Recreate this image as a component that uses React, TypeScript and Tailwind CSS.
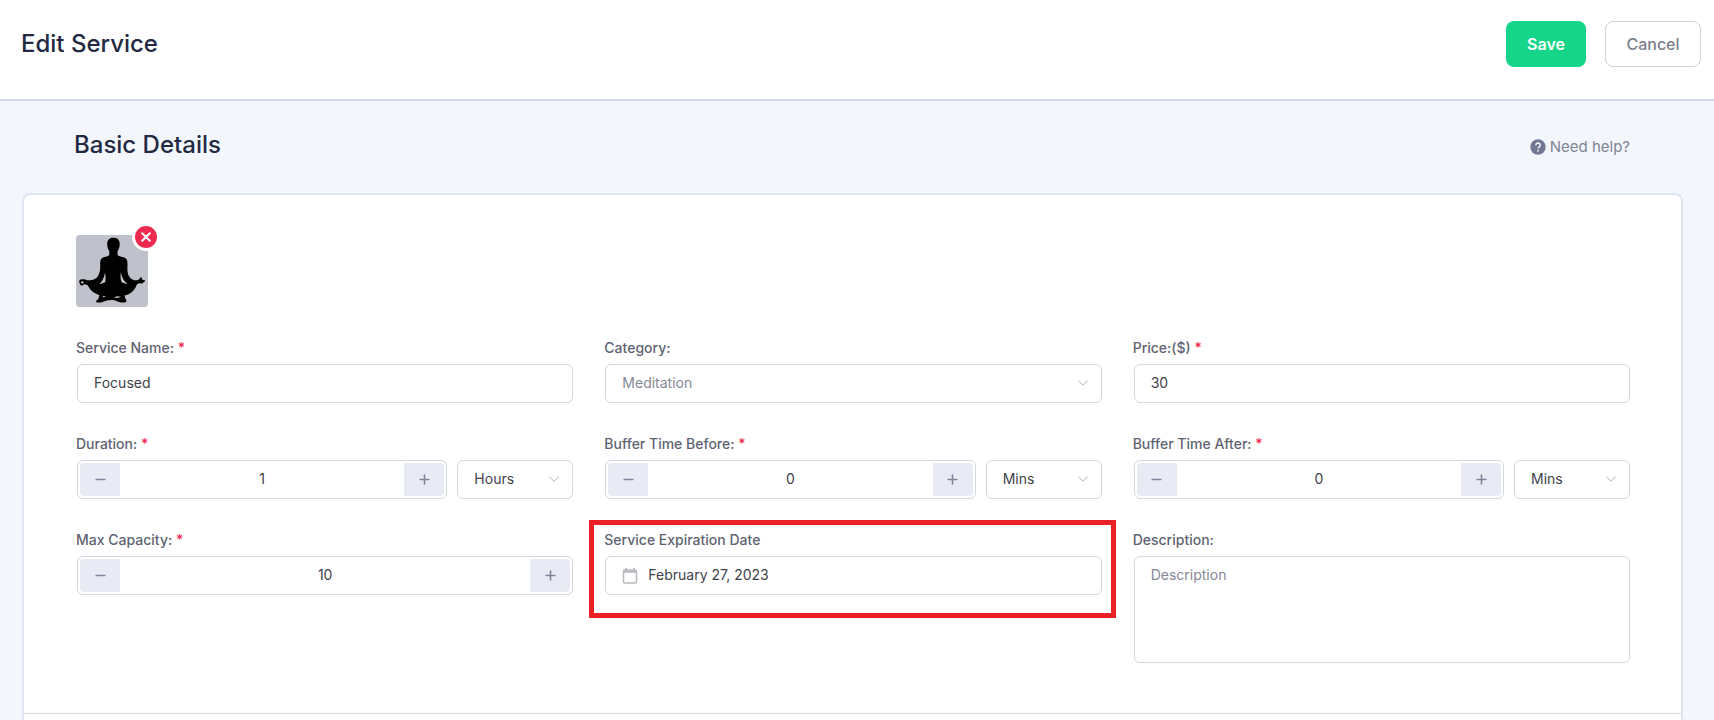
import { useState, type ReactNode } from 'react';
import { ChevronDown, Minus, Plus } from 'lucide-react';

type FieldProps = {
	id: string;
	label: string;
	required?: boolean;
	children: ReactNode;
};

const Field = ({ id, label, required, children }: FieldProps) => (
	<div className="flex flex-col gap-1.5">
		<label
			htmlFor={id}
			className="-ml-px text-sm leading-5 font-medium text-[#5f6372]"
		>
			{label}
			{required && <span className="text-[#ee2a50]"> *</span>}
		</label>
		{children}
	</div>
);

type StepperProps = { id: string; label: string; initial: number };

const Stepper = ({ id, label, initial }: StepperProps) => {
	const [value, setValue] = useState(initial);
	const buttonClass =
		'flex w-10 shrink-0 items-center justify-center bg-[#e8ebf4] text-[#80859a]';

	return (
		<div className="flex h-[39px] min-w-0 flex-1 rounded-md border border-[#d3d7e0] p-0.5">
			<button
				type="button"
				aria-label={`Decrease ${label}`}
				onClick={() => setValue(Math.max(0, value - 1))}
				className={`${buttonClass} rounded-l`}
			>
				<Minus size={15} strokeWidth={2.5} />
			</button>
			<input
				id={id}
				value={value}
				onChange={e => setValue(Number(e.target.value) || 0)}
				className="min-w-0 flex-1 bg-transparent pb-0.5 text-center text-sm text-[#3f424b] outline-none"
			/>
			<button
				type="button"
				aria-label={`Increase ${label}`}
				onClick={() => setValue(value + 1)}
				className={`${buttonClass} rounded-r`}
			>
				<Plus size={15} strokeWidth={2.5} />
			</button>
		</div>
	);
};

type SelectProps = {
	id?: string;
	label: string;
	options: string[];
	className: string;
};

const Select = ({ id, label, options, className }: SelectProps) => (
	<div className={`relative ${className}`}>
		<select
			id={id}
			aria-label={id ? undefined : label}
			className="h-[39px] w-full appearance-none rounded-md border border-[#d3d7e0] bg-white px-4 pb-0.5 text-sm outline-none"
		>
			{options.map(option => (
				<option key={option}>{option}</option>
			))}
		</select>
		<ChevronDown
			size={18}
			strokeWidth={1.25}
			className="pointer-events-none absolute top-2.5 right-2.5 text-[#a9adb8]"
		/>
	</div>
);

const inputClass =
	'h-[39px] w-full rounded-md border border-[#d3d7e0] bg-white px-4 pb-0.5 text-sm text-[#3f424b] outline-none';

const MeditationPicture = () => (
	<svg
		viewBox="0 0 72 72"
		className="size-[72px] rounded"
		role="img"
		aria-label="Meditation"
	>
		<rect width="72" height="72" fill="#c0c2cb" />
		<path d="M37 2.700c-4 0-6 2.800-5.800 6.800.1 2.800.9 5 2.100 6.500v4c-1.500 1.500-4 1.700-6.300 2.400-2.300.8-2.800 3.200-2.800 6.600 0 3.500.2 5.500-.6 8-1 3.500-2 5.500-4.500 6.700-2 1-4.500 1.800-7.300 1.600-2-.7-4.500-1.500-6.800-.9-2 .6-2.200 2.200-1.400 3.600.5 1.800 1.500 3 2.900 2.500.9-.5 1.500-1.300 3-1.100l2.300.8c1.500 3.300 3.500 5.800 6.300 7.600 2 1.300 4 2 5.500 2.400-1 1.300-.8 3-1.500 4-.8.9-2.200 1-2 2.200.2 1.400 2.200 1.100 4 1 3 .3 4.500-1.400 7-1.800 2.500-.6 3.800-.7 5.500-.6 2.500.1 4 1.300 6.500 2 2.500.7 5.500.8 7-.3 1-.9 0-2.200-.8-3.200-.5-1-.2-2-.8-3.100 2.500-.5 5.500-1.500 8-3.900 2-2 3.500-4.400 4.200-6.800 1.500-.9 2.500-1.700 4-1.200 1.200.2 2.300-.2 2.900-1.200 1-.5 1.800-1.200 1.200-2.100-1-.2-2-.3-2.600-.8-.3-1-.4-2-1-2.400-1.100.7-1.600 2-2.700 2.700-1.500.4-3.500 1-5 .4-3.500-1.300-5.200-4-5.800-7.500-.7-3.500.1-6.500-.3-10.500-.2-2.500-1-4-3.200-4.700-2.400-.8-5-.9-6.600-2.400v-4c1.200-1.500 2-3.700 2.100-6.500.2-4-1.700-6.800-5.700-6.800z" />
		<path
			d="M29 37.500c.8 3.500.8 6.500.3 9.500-1.700.8-3.600 2-6 2 2.500-2 5-6 5.700-11.500zM44.800 37.500c-.5 3.500-.3 6.500.7 9.500 1.700.8 3.600 2 6 2-3-2.500-5.700-6-6.700-11.500zM37.500 62.500l3.500-1.200 4 .5-3 1.200zM26.500 61l3.500.4-2.500 1zM5 46.800c.8-.8 2.300-.7 2.600.1.200.9-.3 1.600-1.100 1.600-1 .1-1.900-.8-1.500-1.700z"
			fill="#c0c2cb"
		/>
	</svg>
);

export default function App() {
	const [date, setDate] = useState('February 27, 2023');

	return (
		<div className="flex min-h-screen flex-col bg-[#f3f7fc] font-['Inter','Liberation_Sans',sans-serif]">
			<header className="flex h-[101px] items-start justify-between border-b-2 border-[#d5d9ea] bg-white pt-[21px] pr-[13px] pl-[21px]">
				<h1 className="pt-[7px] text-2xl leading-8 font-medium text-[#242943]">
					Edit Service
				</h1>
				<div className="flex gap-[19px]">
					<button
						type="button"
						className="h-[46px] w-20 rounded-lg bg-[#15d688] text-base font-semibold text-white"
					>
						Save
					</button>
					<button
						type="button"
						className="h-[46px] w-24 rounded-lg border border-[#d0d3da] bg-white text-base font-medium text-[#7c808d]"
					>
						Cancel
					</button>
				</div>
			</header>

			<main className="flex flex-1 flex-col pr-[31px] pl-[22px]">
				<div className="flex h-[92px] items-start justify-between pt-7 pr-[53px] pl-[52px]">
					<h2 className="text-2xl leading-8 font-medium text-[#242943]">
						Basic Details
					</h2>
					<a
						href="#help"
						className="flex items-center gap-1 pt-2 text-[15px] leading-5 text-[#7f8494]"
					>
						<svg viewBox="0 0 16 16" className="size-4" aria-hidden="true">
							<circle cx="8" cy="8" r="7.700" fill="#727892" />
							<path
								d="M5.800 6.200a2.200 2.200 0 1 1 3.300 1.900c-.8.500-1.100.8-1.100 1.500"
								fill="none"
								stroke="#fff"
								strokeWidth="1.400"
							/>
							<circle cx="8" cy="11.700" r=".9" fill="#fff" />
						</svg>
						Need help?
					</a>
				</div>

				<form
					onSubmit={e => e.preventDefault()}
					className="flex-1 rounded-t-lg border-2 border-b-0 border-[#dfe3f3] bg-white"
				>
					<section className="border-b border-[#d6d8dd] pt-10 pr-[51px] pb-[50px] pl-[53px]">
						<div className="relative -ml-px w-[72px]">
							<MeditationPicture />
							<button
								type="button"
								aria-label="Remove picture"
								className="absolute -top-3 -right-3 flex size-7 items-center justify-center rounded-full border-3 border-white bg-[#ee2a50] text-white"
							>
								<svg viewBox="0 0 10 10" className="size-2.5" aria-hidden="true">
									<path
										d="M1.200 1.200l7.600 7.600M8.800 1.200l-7.600 7.600"
										stroke="currentColor"
										strokeWidth="2"
										strokeLinecap="round"
									/>
								</svg>
							</button>
						</div>

						<div className="mt-[31px] grid grid-cols-3 gap-x-8 gap-y-[31px]">
							<Field id="name" label="Service Name:" required>
								<input id="name" defaultValue="Focused" className={inputClass} />
							</Field>
							<Field id="category" label="Category:">
								<Select
									id="category"
									label="Category"
									options={['Meditation', 'Yoga']}
									className="text-[#858995]"
								/>
							</Field>
							<Field id="price" label="Price:($)" required>
								<input id="price" defaultValue="30" className={inputClass} />
							</Field>

							<Field id="duration" label="Duration:" required>
								<div className="flex gap-2.5">
									<Stepper id="duration" label="duration" initial={1} />
									<Select
										label="Duration unit"
										options={['Hours', 'Mins']}
										className="w-[116px] text-[#3f424b]"
									/>
								</div>
							</Field>
							<Field id="before" label="Buffer Time Before:" required>
								<div className="flex gap-2.5">
									<Stepper id="before" label="buffer time before" initial={0} />
									<Select
										label="Buffer time before unit"
										options={['Mins', 'Hours']}
										className="w-[116px] text-[#3f424b]"
									/>
								</div>
							</Field>
							<Field id="after" label="Buffer Time After:" required>
								<div className="flex gap-2.5">
									<Stepper id="after" label="buffer time after" initial={0} />
									<Select
										label="Buffer time after unit"
										options={['Mins', 'Hours']}
										className="w-[116px] text-[#3f424b]"
									/>
								</div>
							</Field>

							<Field id="capacity" label="Max Capacity:" required>
								<div className="flex">
									<Stepper id="capacity" label="max capacity" initial={10} />
								</div>
							</Field>
							<div className="relative">
								<Field id="expiration" label="Service Expiration Date">
									<div className="relative">
										<svg
											viewBox="0 0 16 16"
											className="absolute top-3 left-[17px] size-4 text-[#b9bbc1]"
											fill="none"
											stroke="currentColor"
											aria-hidden="true"
										>
											<rect x="1.500" y="2" width="13" height="13" rx="1.500" strokeWidth="1.600" />
											<path d="M1.500 3.500h13" strokeWidth="2.600" />
											<path d="M4 0v2M12 0v2" strokeWidth="1.800" />
										</svg>
										<input
											id="expiration"
											value={date}
											onChange={e => setDate(e.target.value)}
											className="h-[39px] w-full rounded-md border border-[#d3d7e0] bg-white pr-4 pb-0.5 pl-[42px] text-sm text-[#3f424b] outline-none"
										/>
									</div>
								</Field>
								<div className="pointer-events-none absolute -top-2.5 -right-3.5 -left-4 h-[98px] border-5 border-[#ea2027]" />
							</div>
							<Field id="description" label="Description:">
								<textarea
									id="description"
									placeholder="Description"
									className="block h-[107px] w-full resize-none rounded-md border border-[#d3d7e0] px-4 py-2 text-sm leading-5 text-[#3f424b] outline-none placeholder:text-[#858995]"
								/>
							</Field>
						</div>
					</section>
				</form>
			</main>
		</div>
	);
}
